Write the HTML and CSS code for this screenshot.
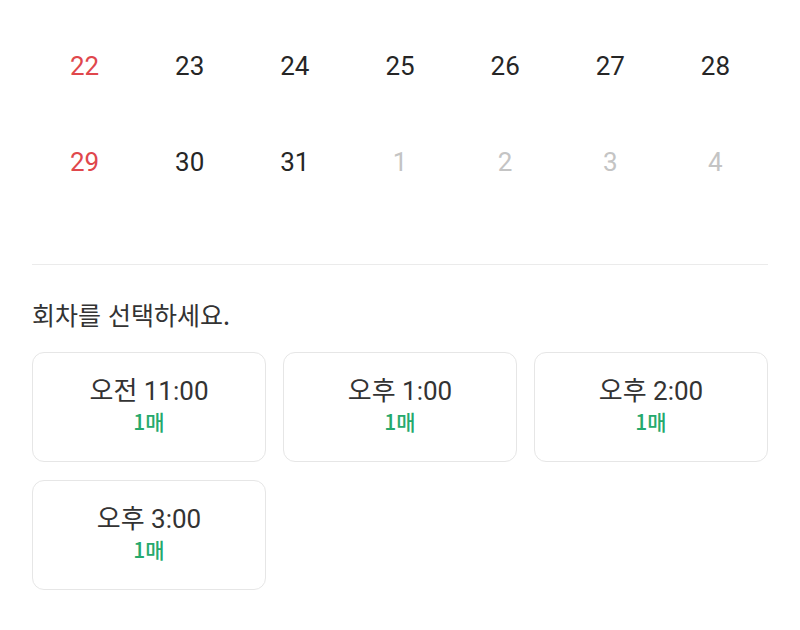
FILE: index.html
```html
<!DOCTYPE html>
<html lang="ko">
<head>
<meta charset="utf-8">
<link rel="stylesheet" href="styles.css">
</head>
<body>
<div class="page">
  <div class="calendar">
    <div class="day sun">22</div><div class="day">23</div><div class="day">24</div><div class="day">25</div><div class="day">26</div><div class="day">27</div><div class="day">28</div>
    <div class="day sun">29</div><div class="day">30</div><div class="day">31</div><div class="day dim">1</div><div class="day dim">2</div><div class="day dim">3</div><div class="day dim">4</div>
  </div>
  <hr class="divider">
  <p class="title">회차를 선택하세요.</p>
  <div class="slots">
    <div class="slot"><div class="time">오전 11:00</div><div class="count">1매</div></div>
    <div class="slot"><div class="time">오후 1:00</div><div class="count">1매</div></div>
    <div class="slot"><div class="time">오후 2:00</div><div class="count">1매</div></div>
    <div class="slot"><div class="time">오후 3:00</div><div class="count">1매</div></div>
  </div>
</div>
</body>
</html>
```
FILE: styles.css
```css
html, body {
  margin: 0;
  background: #fff;
}
body {
  font-family: Roboto, "Noto Sans CJK KR", sans-serif;
  color: #222;
}
.page {
  padding: 18px 32px 0;
}
.calendar {
  display: grid;
  grid-template-columns: repeat(7, 1fr);
  grid-auto-rows: 96px;
}
.day {
  display: flex;
  align-items: center;
  justify-content: center;
  font-size: 26px;
  color: #262626;
}
.day.sun { color: #e0474c; }
.day.dim { color: #c4c4c4; }
.divider {
  margin: 54px 0 0;
  border: 0;
  border-top: 1px solid #ebebeb;
}
.title {
  margin: 32px 0 0;
  font-family: "Noto Sans CJK KR", Roboto, sans-serif;
  font-size: 25px;
  line-height: 34px;
  color: #333;
}
.slots {
  margin-top: 21px;
  display: grid;
  grid-template-columns: repeat(3, 1fr);
  column-gap: 17px;
  row-gap: 18px;
}
.slot {
  height: 110px;
  border: 1px solid #e6e6e6;
  border-radius: 12px;
  box-sizing: border-box;
  display: flex;
  flex-direction: column;
  align-items: center;
  justify-content: center;
  padding-bottom: 4px;
}
.time {
  font-family: Roboto, "Noto Sans CJK KR", sans-serif;
  font-size: 26px;
  line-height: 32px;
  color: #333;
}
.count {
  font-family: "Noto Sans CJK KR", sans-serif;
  font-size: 21px;
  line-height: 28px;
  font-weight: 500;
  color: #25a96d;
}
```
